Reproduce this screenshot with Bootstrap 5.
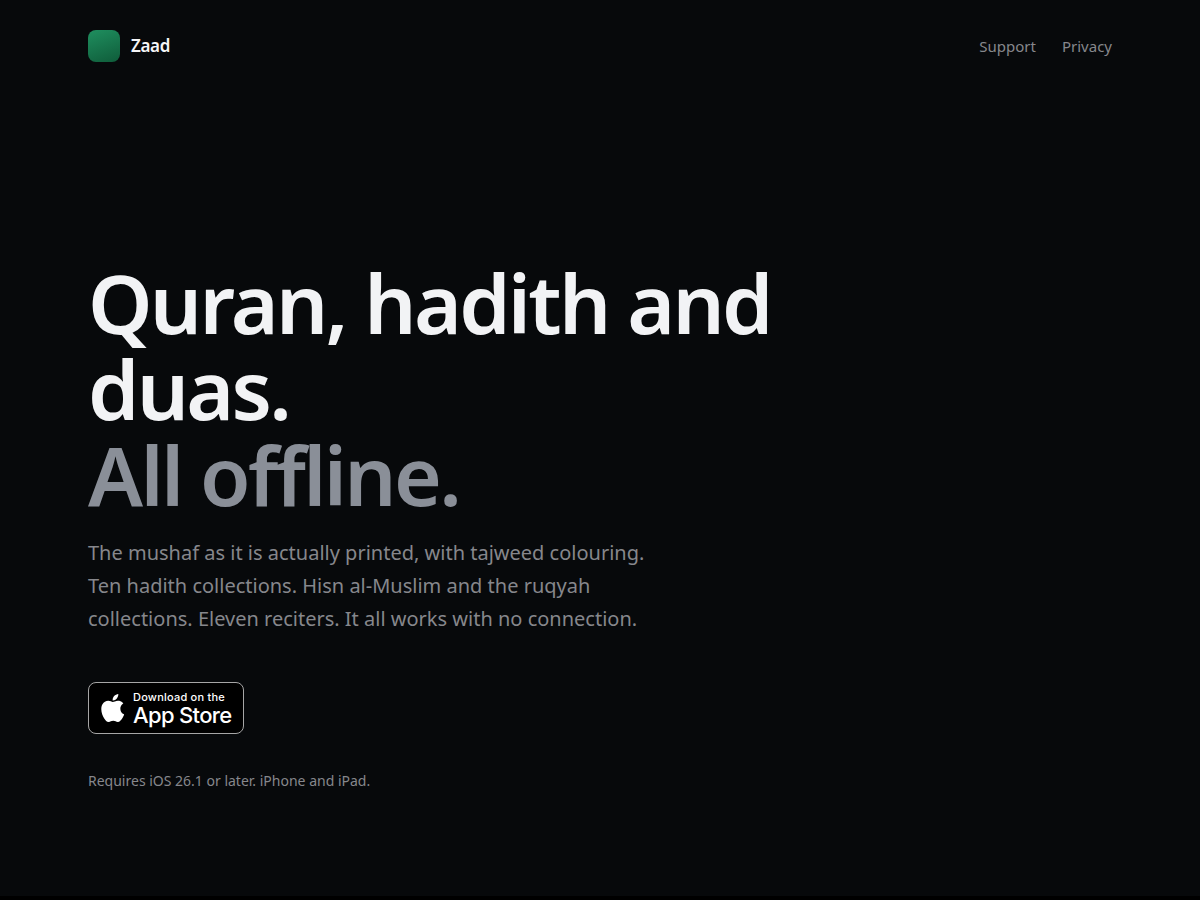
<!DOCTYPE html>
<html lang="en">
<head>
<meta charset="utf-8">
<meta name="viewport" content="width=device-width, initial-scale=1">
<title>Zaad</title>
<link href="https://cdn.jsdelivr.net/npm/bootstrap@5.3.0/dist/css/bootstrap.min.css" rel="stylesheet">
<style>
body{background:#000;color:#f2f3f5;font-family:"Noto Sans",sans-serif}
.page{background:#07090b;min-height:calc(100vh - 4px)}
.wrap{max-width:1072px;padding:0 24px}
.site-head{height:92px}
.logo-mark{width:32px;height:32px;border-radius:8px;background:linear-gradient(160deg,#1f8f5f,#0f5c3a)}
.brand{font-size:17px;font-weight:600;letter-spacing:-.02em;color:#f5f5f7;gap:11px}
.site-nav{gap:26px}
.nav-text{font-size:15px;color:#86878c}
.hero{padding:167px 0 102px}
.hero h1{font-size:82px;line-height:86px;font-weight:600;letter-spacing:-.033em;max-width:760px;margin-bottom:19px}
.hero h1 span{color:#8a8f98}
.intro{font-size:20px;line-height:33px;color:#86878c;max-width:580px;margin-bottom:47px}
.store-badge{height:52px;width:156px;background:#000;border:1px solid #a6a6a6;border-radius:8px;color:#fff;font-family:Inter,sans-serif;padding:0 12px;gap:8px}
.store-small{font-size:11px;line-height:13px;font-weight:500;letter-spacing:.02em}
.store-big{font-size:22px;line-height:22px;font-weight:500;letter-spacing:-.03em}
.req{font-size:14px;line-height:22px;color:#86878c;margin:36px 0 0}
</style>
</head>
<body>
<div class="page">
<div class="wrap mx-auto">
<header class="site-head d-flex align-items-center justify-content-between">
<a href="#" class="brand d-flex align-items-center text-decoration-none"><span class="logo-mark"></span>Zaad</a>
<nav class="site-nav d-flex"><a href="#" class="nav-text text-decoration-none">Support</a><a href="#" class="nav-text text-decoration-none">Privacy</a></nav>
</header>
<main class="hero">
<h1>Quran, hadith and duas.<br><span>All offline.</span></h1>
<p class="intro">The mushaf as it is actually printed, with tajweed colouring. Ten hadith collections. Hisn al-Muslim and the ruqyah collections. Eleven reciters. It all works with no connection.</p>
<a href="#" class="store-badge d-flex align-items-center text-decoration-none text-nowrap">
<svg class="flex-shrink-0" width="24" height="28" viewBox="2.8 0 20.1 24" fill="#fff" aria-hidden="true"><path d="M12.152 6.896c-.948 0-2.415-1.078-3.96-1.04-2.04.027-3.91 1.183-4.961 3.014-2.117 3.675-.546 9.103 1.519 12.09 1.013 1.454 2.208 3.09 3.792 3.039 1.52-.065 2.09-.987 3.935-.987 1.831 0 2.35.987 3.96.948 1.637-.026 2.676-1.48 3.676-2.948 1.156-1.688 1.636-3.325 1.662-3.415-.039-.013-3.182-1.221-3.22-4.857-.026-3.04 2.48-4.494 2.597-4.559-1.429-2.09-3.623-2.324-4.39-2.376-2-.156-3.675 1.09-4.61 1.09zM15.53 3.83c.843-1.012 1.4-2.427 1.245-3.83-1.207.052-2.662.805-3.532 1.818-.78.896-1.454 2.338-1.273 3.714 1.338.104 2.715-.688 3.559-1.701" transform="translate(.6 0)"/></svg>
<span class="d-flex flex-column"><span class="store-small">Download on the</span><span class="store-big">App Store</span></span>
</a>
<p class="req">Requires iOS 26.1 or later. iPhone and iPad.</p>
</main>
</div>
</div>
<script src="https://cdn.jsdelivr.net/npm/bootstrap@5.3.0/dist/js/bootstrap.bundle.min.js"></script>
</body>
</html>
